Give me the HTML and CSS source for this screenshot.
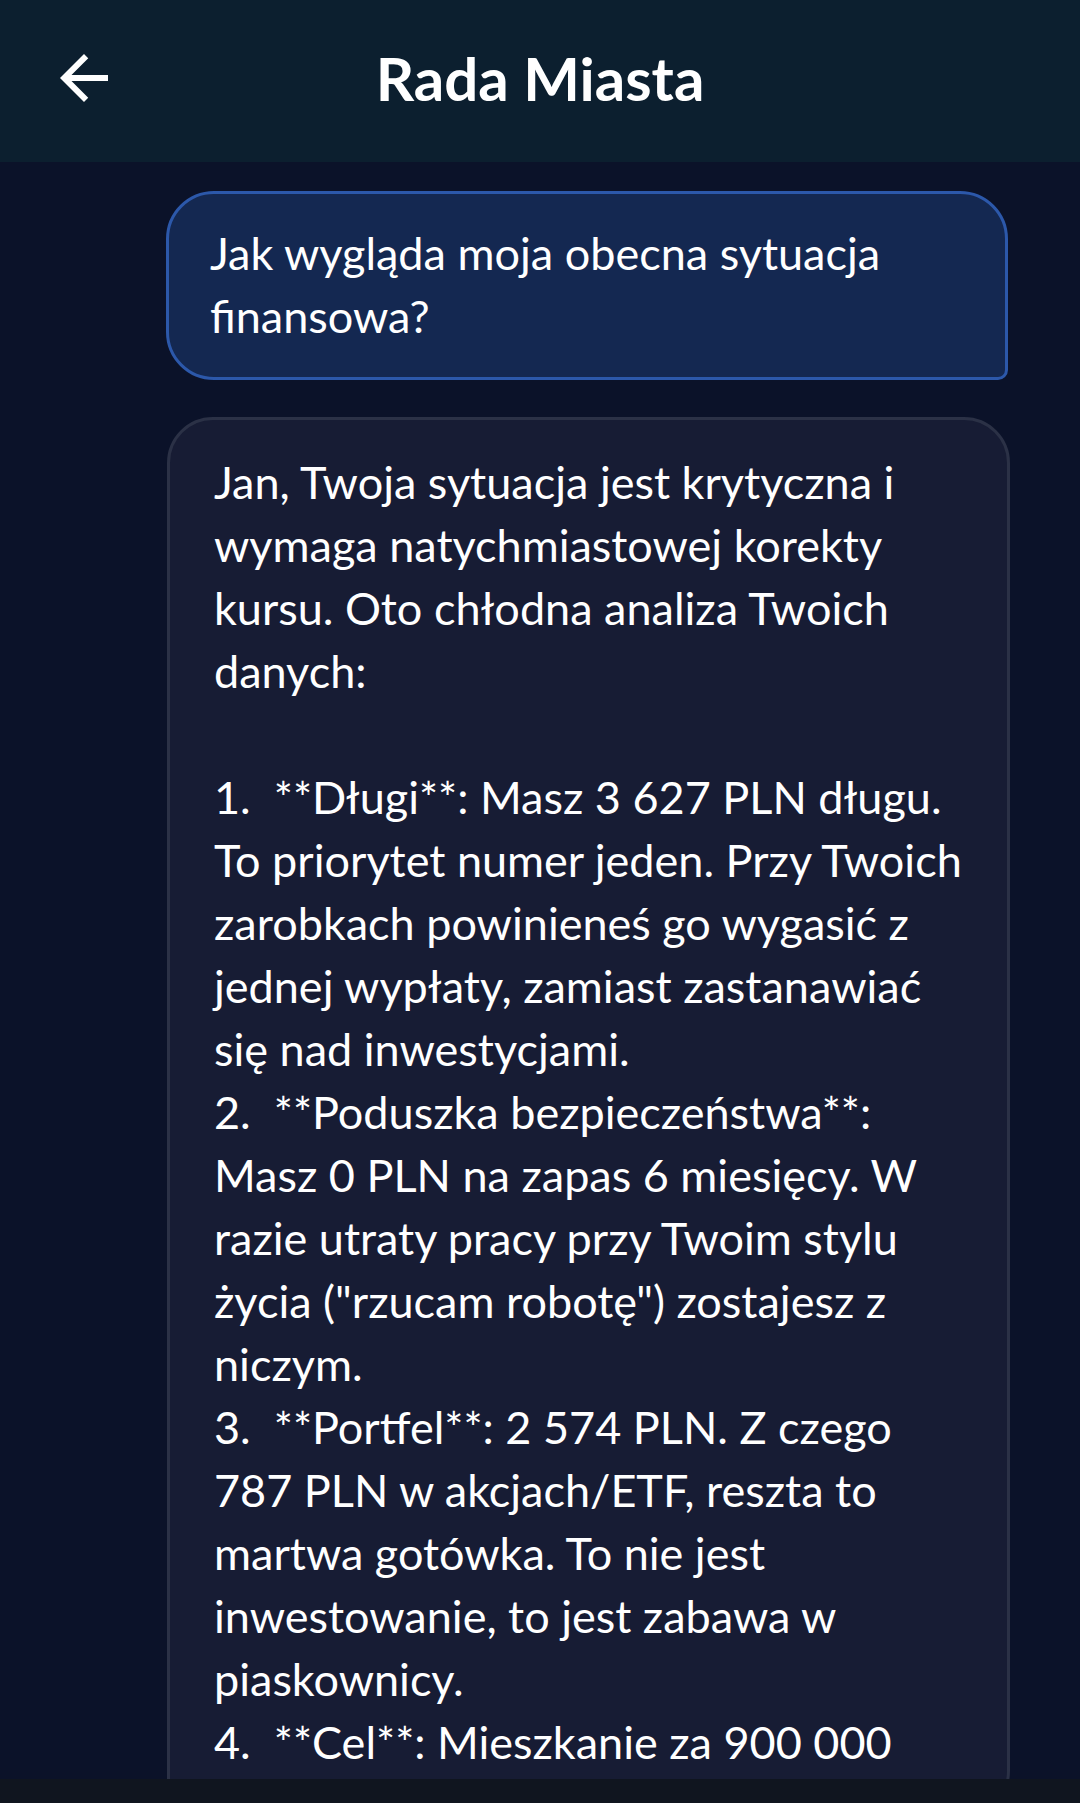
FILE: index.html
```html
<!DOCTYPE html>
<html lang="pl">
<head>
<meta charset="utf-8">
<title>Rada Miasta</title>
<link rel="stylesheet" href="styles.css">
</head>
<body>
<div class="app">
  <header class="topbar">
    <button class="back" aria-label="Wstecz">
      <svg viewBox="0 0 24 24" width="72" height="72"><path fill="#ffffff" d="M20 11H7.83l5.59-5.59L12 4l-8 8 8 8 1.41-1.41L7.83 13H20v-2z"/></svg>
    </button>
    <h1 class="title">Rada Miasta</h1>
    <span class="spacer"></span>
  </header>
  <main class="chat">
    <div class="msg user"><p class="text">Jak wygląda moja obecna sytuacja finansowa?</p></div>
    <div class="msg bot"><p class="text">Jan, Twoja sytuacja jest krytyczna i wymaga natychmiastowej korekty kursu. Oto chłodna analiza Twoich danych:

1.  **Długi**: Masz 3 627 PLN długu. To priorytet numer jeden. Przy Twoich zarobkach powinieneś go wygasić z jednej wypłaty, zamiast zastanawiać się nad inwestycjami.
2.  **Poduszka bezpieczeństwa**: Masz 0 PLN na zapas 6 miesięcy. W razie utraty pracy przy Twoim stylu życia ("rzucam robotę") zostajesz z niczym.
3.  **Portfel**: 2 574 PLN. Z czego 787 PLN w akcjach/ETF, reszta to martwa gotówka. To nie jest inwestowanie, to jest zabawa w piaskownicy.
4.  **Cel**: Mieszkanie za 900 000</p></div>
  </main>
  <div class="navbar"></div>
</div>
</body>
</html>
```
FILE: styles.css
```css
* { box-sizing: border-box; }
html, body { margin: 0; padding: 0; }
body {
  background: #0b1229;
  font-family: Lato, "Noto Sans", sans-serif;
  color: #ffffff;
}
.app {
  width: 1080px;
  height: 1803px;
  display: flex;
  flex-direction: column;
  overflow: hidden;
}
.topbar {
  height: 162px;
  flex: 0 0 162px;
  background: #0c1f2f;
  display: grid;
  grid-template-columns: 1fr auto 1fr;
  align-items: center;
}
.back {
  justify-self: start;
  margin-left: 48px;
  margin-top: -6px;
  width: 72px;
  height: 72px;
  padding: 0;
  border: 0;
  background: transparent;
  display: flex;
}
.title {
  margin: -6px 0 0 0;
  font-size: 60px;
  font-weight: 700;
  line-height: 1;
}
.chat {
  flex: 1 1 auto;
  overflow: hidden;
  padding: 29px 72px 0 166px;
  display: flex;
  flex-direction: column;
  gap: 37px;
}
.msg .text {
  margin: 0;
  font-size: 45px;
  line-height: 63px;
  white-space: pre-wrap;
}
.user {
  background: #142851;
  border: 3px solid #2c58aa;
  border-radius: 48px 48px 10px 48px;
  padding: 28px 40px 29px 41px;
}
.bot {
  margin-left: 1px;
  margin-right: -2px;
  background: #171c34;
  border: 3px solid #2b3146;
  border-radius: 46px 46px 46px 10px;
  padding: 31px 40px 40px 44px;
  flex-shrink: 0;
}
.navbar {
  flex: 0 0 24px;
  height: 24px;
  background: #10151f;
}
```
